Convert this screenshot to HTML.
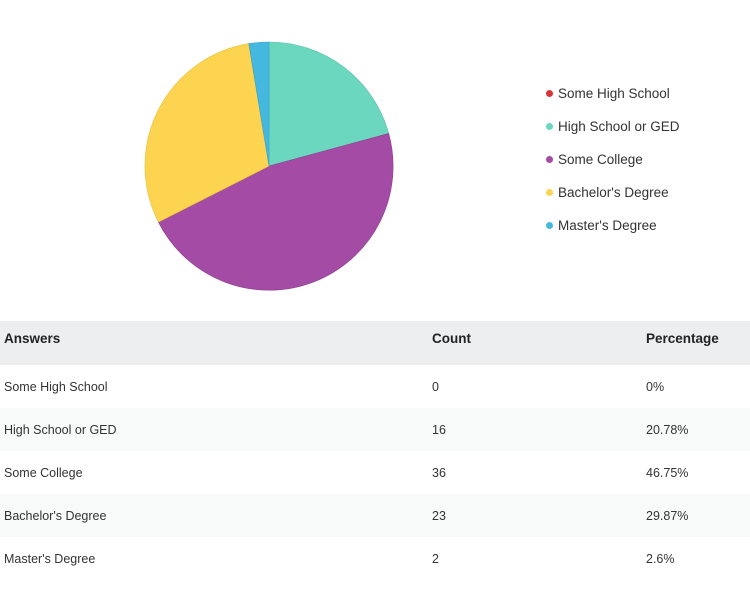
<!DOCTYPE html>
<html><head><style>
body{margin:0;width:750px;height:591px;background:#fff;font-family:"Liberation Sans",sans-serif;color:#333;overflow:hidden;position:relative}
.leg{position:absolute;left:546px;font-size:13.5px;color:#333}
.leg i{display:inline-block;width:7px;height:7px;border-radius:50%;margin-right:5px;vertical-align:1px}
table{position:absolute;left:0;top:321px;width:750px;border-collapse:collapse;table-layout:fixed}
td,th{text-align:left;padding:0 0 0 4px;font-size:12.5px;color:#333;height:43px}
th{font-weight:bold;font-size:13.5px;color:#222;height:44px;background:#edeef0;padding-bottom:10px;box-sizing:border-box}
tr.a td{background:#f8f9f9}
</style></head><body>
<svg width="750" height="320" style="position:absolute;left:0;top:0">
<g stroke-width="0.6">
<path d="M269,166 L269,42 A124,124 0 0 1 388.7,133.5 Z" fill="#6bd7be" stroke="#5bc0aa"/>
<path d="M269,166 L388.7,133.5 A124,124 0 0 1 158.4,222.1 Z" fill="#a44ba5" stroke="#8e3d8f"/>
<path d="M269,166 L158.4,222.1 A124,124 0 0 1 248.8,43.6 Z" fill="#fdd44f" stroke="#e8bd3a"/>
<path d="M269,166 L248.8,43.6 A124,124 0 0 1 269,42 Z" fill="#45b8e0" stroke="#3aa0c6"/>
</g></svg>
<div class="leg" style="top:86px"><i style="background:#d63435"></i>Some High School</div>
<div class="leg" style="top:119px"><i style="background:#6bd7be"></i>High School or GED</div>
<div class="leg" style="top:152px"><i style="background:#a44ba5"></i>Some College</div>
<div class="leg" style="top:185px"><i style="background:#fdd44f"></i>Bachelor's Degree</div>
<div class="leg" style="top:218px"><i style="background:#45b8e0"></i>Master's Degree</div>
<table>
<colgroup><col style="width:428px"><col style="width:214px"><col></colgroup>
<tr><th>Answers</th><th>Count</th><th>Percentage</th></tr>
<tr><td>Some High School</td><td>0</td><td>0%</td></tr>
<tr class="a"><td>High School or GED</td><td>16</td><td>20.78%</td></tr>
<tr><td>Some College</td><td>36</td><td>46.75%</td></tr>
<tr class="a"><td>Bachelor's Degree</td><td>23</td><td>29.87%</td></tr>
<tr><td>Master's Degree</td><td>2</td><td>2.6%</td></tr>
</table>
</body></html>
